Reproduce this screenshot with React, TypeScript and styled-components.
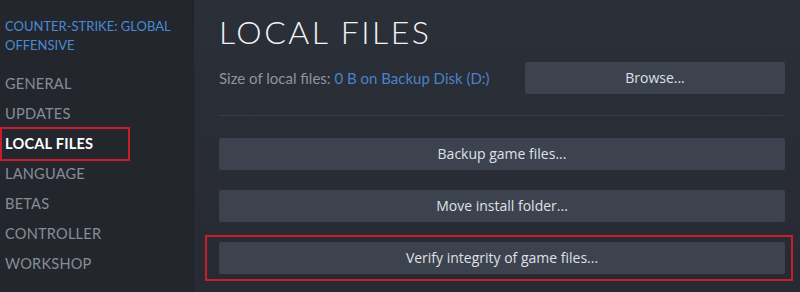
import React from 'react';
import styled, { createGlobalStyle } from 'styled-components';

const GlobalStyle = createGlobalStyle`
  html, body {
    margin: 0;
    padding: 0;
    background: #22252c;
  }
  body {
    font-family: 'Lato', 'Open Sans', sans-serif;
  }
`;

const Window = styled.div`
  display: flex;
  width: 800px;
  height: 292px;
  overflow: hidden;
`;

const Sidebar = styled.nav`
  width: 194px;
  flex-shrink: 0;
  padding: 17px 0 0 5px;
  box-sizing: border-box;
  background: #23262d;
  border-right: 1px solid #1e2127;
`;

const GameTitle = styled.div`
  font-size: 13px;
  line-height: 19px;
  color: #4a8ad4;
  text-transform: uppercase;
  margin-bottom: 14px;
`;

const NavItem = styled.div<{ $active?: boolean }>`
  position: relative;
  height: 30px;
  line-height: 30px;
  font-size: 14.6px;
  letter-spacing: 0.2px;
  color: ${(p) => (p.$active ? '#ffffff' : '#878d96')};
  font-weight: ${(p) => (p.$active ? 700 : 400)};
`;

const Highlight = styled.span<{ $l: number; $r: number; $t: number; $b: number }>`
  position: absolute;
  left: ${(p) => p.$l}px;
  right: ${(p) => p.$r}px;
  top: ${(p) => p.$t}px;
  bottom: ${(p) => p.$b}px;
  border: 2px solid #c91d2b;
  pointer-events: none;
`;

const Main = styled.main`
  flex: 1;
  padding: 12px 15px 0 25px;
  background: linear-gradient(180deg, #2b2f38 0%, #272a32 100%);
  display: flex;
  flex-direction: column;
`;

const Title = styled.h1`
  margin: 0;
  font-family: 'Lato', sans-serif;
  font-weight: 300;
  font-size: 32px;
  line-height: 40px;
  letter-spacing: 2.5px;
  color: #f2f3f5;
`;

const SizeRow = styled.div`
  display: flex;
  align-items: center;
  justify-content: space-between;
  margin-top: 10px;
  padding-bottom: 21px;
  border-bottom: 1px solid #383c45;
`;

const SizeText = styled.div`
  font-size: 15px;
  color: #8e959e;
`;

const Link = styled.span`
  color: #4782cb;
`;

const Button = styled.div<{ $width?: number }>`
  position: relative;
  width: ${(p) => (p.$width ? `${p.$width}px` : 'auto')};
  height: 32px;
  line-height: 32px;
  text-align: center;
  font-family: 'Open Sans', sans-serif;
  font-size: 14px;
  color: #dde1e5;
  background: #3d434e;
  border-radius: 2px;
`;

const ButtonList = styled.div`
  display: flex;
  flex-direction: column;
  gap: 20px;
  margin-top: 22px;
`;

const navItems = ['General', 'Updates', 'Local Files', 'Language', 'Betas', 'Controller', 'Workshop'];

const App: React.FC = () => {
  return (
    <>
      <GlobalStyle />
      <Window>
        <Sidebar>
          <GameTitle>
            Counter-Strike: Global
            <br />
            Offensive
          </GameTitle>
          {navItems.map((item) => (
            <NavItem key={item} $active={item === 'Local Files'}>
              {item.toUpperCase()}
              {item === 'Local Files' && <Highlight $l={-5} $r={63} $t={-2} $b={-2} />}
            </NavItem>
          ))}
        </Sidebar>
        <Main>
          <Title>LOCAL FILES</Title>
          <SizeRow>
            <SizeText>
              Size of local files: <Link>0 B on Backup Disk (D:)</Link>
            </SizeText>
            <Button $width={260}>Browse...</Button>
          </SizeRow>
          <ButtonList>
            <Button>Backup game files...</Button>
            <Button>Move install folder...</Button>
            <Button>
              Verify integrity of game files...
              <Highlight $l={-14} $r={-8} $t={-7} $b={-7} />
            </Button>
          </ButtonList>
        </Main>
      </Window>
    </>
  );
};

export default App;
